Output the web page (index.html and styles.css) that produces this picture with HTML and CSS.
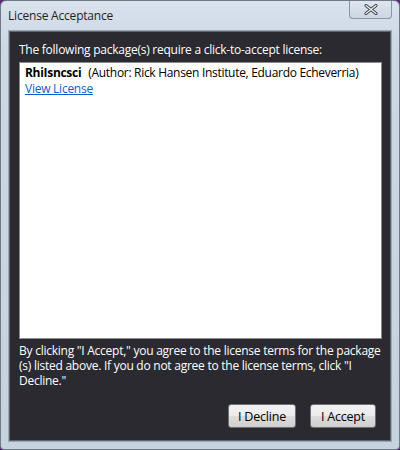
FILE: index.html
```html
<!DOCTYPE html>
<html>
<head>
<meta charset="utf-8">
<link rel="stylesheet" href="styles.css">
</head>
<body>
<div class="window">
  <div class="titlebar">
    <span class="title">License Acceptance</span>
    <div class="close">
      <svg width="14" height="11" viewBox="0 0 14 11">
        <path d="M2 1.5 L12 9.5 M12 1.5 L2 9.5" stroke="#3b4048" stroke-width="3" stroke-linecap="round"/>
        <path d="M2 1.5 L12 9.5 M12 1.5 L2 9.5" stroke="#f4f6f9" stroke-width="1.2" stroke-linecap="round"/>
      </svg>
    </div>
  </div>
  <div class="content">
    <p class="intro">The following package(s) require a click-to-accept license:</p>
    <div class="list">
      <div class="pkg"><b class="name">RhiIsncsci</b><span class="author">(Author: Rick Hansen Institute, Eduardo Echeverria)</span></div>
      <div class="linkrow"><a class="link" href="#">View License</a></div>
    </div>
    <p class="note">By clicking "I Accept," you agree to the license terms for the package (s) listed above. If you do not agree to the license terms, click "I Decline."</p>
    <div class="buttons">
      <button class="btn">I Decline</button>
      <button class="btn">I Accept</button>
    </div>
  </div>
</div>
</body>
</html>
```
FILE: styles.css
```css
html, body {
  margin: 0;
  padding: 0;
  background: #5b2a73;
}
body {
  font-family: "Open Sans", "Noto Sans", sans-serif;
  font-size: 12px;
}
.window {
  width: 400px;
  height: 450px;
  box-sizing: border-box;
  border: 1px solid #6f7a87;
  border-radius: 6px 6px 4px 4px;
  background: linear-gradient(180deg, #d9e2ed 0%, #cdd8e5 10%, #c7d2df 100%);
  display: flex;
  flex-direction: column;
}
.titlebar {
  height: 29px;
  display: flex;
  align-items: flex-start;
  padding-left: 7px;
  padding-right: 7px;
}
.title {
  margin-top: 6px;
  color: #1e1e1e;
  font-size: 12px;
  letter-spacing: -0.2px;
}
.close {
  margin-left: auto;
  width: 43px;
  height: 18px;
  box-sizing: border-box;
  border: 1px solid #8a96a5;
  border-top: none;
  border-radius: 0 0 4px 4px;
  background: linear-gradient(180deg, #dfe6ee, #ccd6e2);
  display: flex;
  align-items: center;
  justify-content: center;
}
.close svg { display: block; margin-top: -1px; }
.content {
  flex: 1;
  margin: 0 7px 7px 7px;
  background: #2b2a30;
  border: 1px solid #9aa6b4;
  box-shadow: inset 0 0 0 1px #5f6672;
  padding: 7px 9px 13px 10px;
  display: flex;
  flex-direction: column;
  color: #ffffff;
}
.intro {
  margin: 4px 0 4px 0;
  letter-spacing: -0.25px;
  line-height: 16px;
}
.list {
  flex: 1;
  background: #ffffff;
  border: 1px solid #8c8c8c;
  padding: 2px 5px 3px 5px;
  color: #000;
}
.pkg {
  line-height: 16px;
  letter-spacing: -0.3px;
}
.name {
  font-weight: bold;
  letter-spacing: -0.3px;
  margin-right: 7px;
}
.linkrow {
  line-height: 16px;
  margin-top: 0;
}
.link {
  color: #0a5fd0;
  text-decoration: underline;
  letter-spacing: -0.25px;
}
.note {
  margin: 4px 0 0 0;
  line-height: 15px;
  letter-spacing: -0.25px;
}
.buttons {
  display: flex;
  justify-content: flex-end;
  gap: 14px;
  margin-top: 16px;
  padding-right: 6px;
}
.btn {
  height: 24px;
  box-sizing: border-box;
  border: 1px solid #707070;
  border-radius: 3px;
  background: linear-gradient(180deg, #f2f2f2 0%, #ebebeb 50%, #dddddd 51%, #cfcfcf 100%);
  font-family: "Open Sans", "Noto Sans", sans-serif;
  font-size: 12.5px;
  letter-spacing: -0.2px;
  color: #000;
  padding: 0;
}
.btn:first-child { width: 68px; }
.btn:last-child { width: 66px; }
```
